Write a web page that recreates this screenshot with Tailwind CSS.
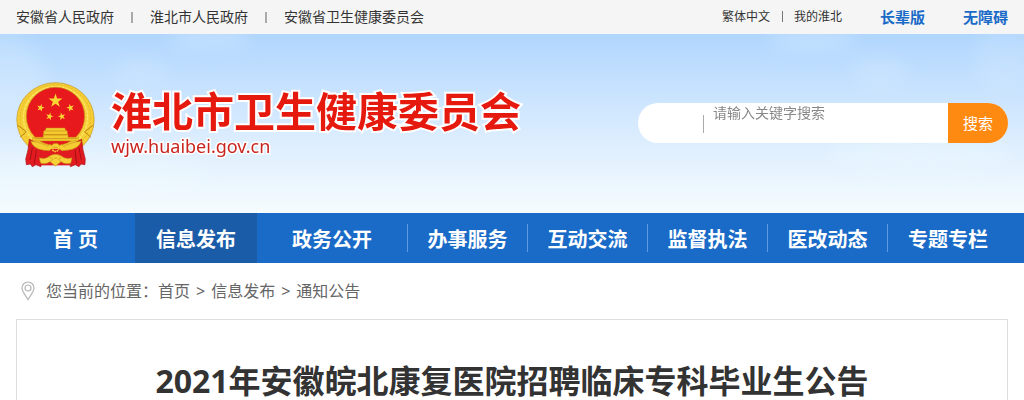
<!DOCTYPE html>
<html lang="zh-CN">
<head>
    <meta charset="UTF-8" />
    <meta name="viewport" content="width=device-width, initial-scale=1.0" />
    <title>2021年安徽皖北康复医院招聘临床专科毕业生公告</title>
    <script src="https://cdn.jsdelivr.net/npm/@tailwindcss/browser@4"></script>
</head>
<body class="bg-white font-['Noto_Sans','Noto_Sans_CJK_SC',sans-serif] text-[#333]">
    <!-- top links -->
    <div class="flex h-[34px] items-center justify-between bg-[#f5f5f5] px-4">
        <div class="flex items-center text-sm">
            <a href="#">安徽省人民政府</a>
            <span class="mx-[17px] h-[11px] w-[2px] bg-[#aaa]"></span>
            <a href="#">淮北市人民政府</a>
            <span class="mx-[17px] h-[11px] w-[2px] bg-[#aaa]"></span>
            <a href="#">安徽省卫生健康委员会</a>
        </div>
        <div class="flex items-center text-xs">
            <a href="#">繁体中文</a>
            <span class="ml-3 mr-[11px] h-[11px] w-px bg-[#777]"></span>
            <a href="#">我的淮北</a>
            <a href="#" class="ml-[38px] text-[15px] font-bold text-[#1a6bc7]">长辈版</a>
            <a href="#" class="ml-[38px] text-[15px] font-bold text-[#1a6bc7]">无障碍</a>
        </div>
    </div>

    <!-- banner -->
    <header class="relative flex h-[179px] items-center justify-between overflow-hidden bg-linear-to-b from-[#b0d6fe] via-[#d6eafe] to-[#f6fcfe] px-4 pb-px">
        <svg class="absolute inset-0 h-full w-full" viewBox="0 0 1024 179" preserveAspectRatio="none" aria-hidden="true">
            <defs>
                <filter id="soft" x="-30%" y="-50%" width="160%" height="200%"><feGaussianBlur stdDeviation="9" /></filter>
            </defs>
            <g fill="#f2fbff" filter="url(#soft)">
                <ellipse cx="0" cy="40" rx="44" ry="38" opacity=".2" />
                <ellipse cx="210" cy="4" rx="40" ry="8" opacity=".3" />
                <ellipse cx="140" cy="38" rx="26" ry="14" opacity=".15" />
                <ellipse cx="812" cy="5" rx="44" ry="8" opacity=".3" />
                <ellipse cx="880" cy="38" rx="26" ry="16" opacity=".15" />
                <ellipse cx="1005" cy="25" rx="30" ry="30" opacity=".15" />
                <ellipse cx="920" cy="120" rx="90" ry="14" opacity=".35" />
                <ellipse cx="60" cy="140" rx="150" ry="25" opacity=".3" />
            </g>
        </svg>

        <a href="#" class="relative flex items-center">
            <svg class="mt-1 h-[86px] w-[79px] shrink-0" viewBox="50 34 236 260" role="img" aria-label="国徽">
                <defs>
                    <path id="star" d="M0-22 5-7H21L8 3 13 18 0 9-13 18-8 3-21-7H-5Z" />
                </defs>
                <ellipse cx="168" cy="148" rx="117" ry="112" fill="#f5cf35" stroke="#c99212" stroke-width="2" />
                <ellipse cx="168" cy="144" rx="107" ry="102" fill="none" stroke="#dfaf24" stroke-width="2" stroke-dasharray="7 4" />
                <ellipse cx="168" cy="142" rx="97" ry="94" fill="none" stroke="#fbe66b" stroke-width="4" stroke-dasharray="9 3" />
                <circle cx="168" cy="138" r="88" fill="#e8191d" stroke="#c58513" stroke-width="2" />
                <g fill="#fad733">
                    <use href="#star" transform="translate(168 91)" />
                    <use href="#star" transform="translate(123 112) rotate(15) scale(.55)" />
                    <use href="#star" transform="translate(213 112) rotate(-15) scale(.55)" />
                    <use href="#star" transform="translate(150 138) rotate(15) scale(.55)" />
                    <use href="#star" transform="translate(187 138) rotate(-15) scale(.55)" />
                </g>
                <!-- gate tower -->
                <path fill="#f3ca30" stroke="#c98a12" stroke-width="1.5" d="M140 173H196L199 180 204 183V193H132V183L137 180ZM131 193H206V201H237L240 212H97L100 201H131Z" />
                <path stroke="#c98a12" stroke-width="2" d="M136 182H200M133 194H204M103 205H234" />
                <!-- ribbon and gear -->
                <path fill="#e11b20" stroke="#a90f17" stroke-width="2" d="M89 207 130 229 150 252 126 257 124 290 109 284 98 290 92 282 80 284 78 267 85 239ZM247 207 206 229 186 252 211 257 213 290 228 284 239 290 245 282 257 284 258 267 251 239Z" />
                <path stroke="#a50f18" stroke-width="3" fill="none" d="M98 232 91 270M110 240 104 281M239 232 246 270M227 240 232 281" />
                <path fill="#e11b20" d="M124 236H212V286H124Z" />
                <path fill="#f5cc31" stroke="#bd8312" stroke-width="1.5" d="M93 212Q130 218 145 229L151 222 157 227 162 220H175L180 227 187 222 193 229Q210 218 246 212 238 237 205 240L187 242Q168 220 149 242L131 240Q99 235 93 212Z" />
                <circle cx="168" cy="234" r="10" fill="none" stroke="#f6cf35" stroke-width="5" stroke-dasharray="5 2" />
                <path fill="#f7d13a" stroke="#b87b10" stroke-width="1.5" d="M119 263Q139 269 151 257 168 248 185 257 198 269 218 263L214 280Q195 284 185 275L168 288 151 275Q141 284 123 280Z" />
                <path fill="none" stroke="#c78b15" stroke-width="2" d="M149 260 160 268 152 275M187 260 177 268 185 275M163 264H174" />
                <path fill="none" stroke="#b98010" stroke-width="3" d="M53 164 80 184M283 164 256 184M80 184 61 201M256 184 275 201" />
            </svg>
            <span class="ml-4 flex flex-col gap-[3px] pb-[2px] text-[#e6190f]">
                <span class="text-[41px] font-bold leading-[44px] [paint-order:stroke_fill] [-webkit-text-stroke:4px_white]">淮北市卫生健康委员会</span>
                <span class="text-lg leading-5 text-[#c9241d] [paint-order:stroke_fill] [-webkit-text-stroke:3px_white]">wjw.huaibei.gov.cn</span>
            </span>
        </a>

        <form class="relative flex h-10 w-[370px] shrink-0 overflow-hidden rounded-full bg-white" onsubmit="return false">
            <span class="mt-3 h-[18px] w-[66px] shrink-0 border-r border-[#aaa]"></span>
            <input type="text" aria-label="请输入关键字搜索" placeholder="请输入关键字搜索" class="h-5 min-w-0 flex-1 pl-[9px] text-sm placeholder:text-[#888] focus:outline-none" />
            <button type="submit" class="w-[60px] bg-[#ff8a12] text-[15px] text-white">搜索</button>
        </form>
    </header>

    <!-- main menu -->
    <nav class="grid h-[50px] grid-cols-[119fr_122fr_150fr_120fr_120fr_120fr_120fr_121fr] items-center bg-[#1a6bc7] px-4 text-center text-xl font-bold leading-6 text-white">
        <a href="#" class="pt-1">首 页</a>
        <a href="#" class="flex h-full items-center justify-center bg-[#1b5ca9] pt-1">信息发布</a>
        <a href="#" class="pt-1">政务公开</a>
        <a href="#" class="border-l border-[#5c9be2] pt-1">办事服务</a>
        <a href="#" class="border-l border-[#5c9be2] pt-1">互动交流</a>
        <a href="#" class="border-l border-[#5c9be2] pt-1">监督执法</a>
        <a href="#" class="border-l border-[#5c9be2] pt-1">医改动态</a>
        <a href="#" class="border-l border-[#5c9be2] pt-1">专题专栏</a>
    </nav>

    <main class="px-4">
        <div class="flex h-14 items-center pl-[5px] text-base text-[#666]">
            <svg class="mr-[11px] h-5 w-[14px]" viewBox="0 0 14 20" fill="none" stroke="#b5b5b5" stroke-width="1.2" aria-hidden="true">
                <path d="M7 18.5C5 15 1 10.5 1 7a6 6 0 0 1 12 0c0 3.500-4 8-6 11.500Z" />
                <circle cx="7" cy="7" r="3" />
            </svg>
            <span>您当前的位置：</span>
            <a href="#">首页</a>
            <span class="mx-[6px]">&gt;</span>
            <a href="#">信息发布</a>
            <span class="mx-[6px]">&gt;</span>
            <a href="#">通知公告</a>
        </div>
        <article class="border border-b-0 border-[#ddd] pt-[42px]">
            <h1 class="text-center text-[32px] font-bold leading-[38px]">2021年安徽皖北康复医院招聘临床专科毕业生公告</h1>
        </article>
    </main>
</body>
</html>
